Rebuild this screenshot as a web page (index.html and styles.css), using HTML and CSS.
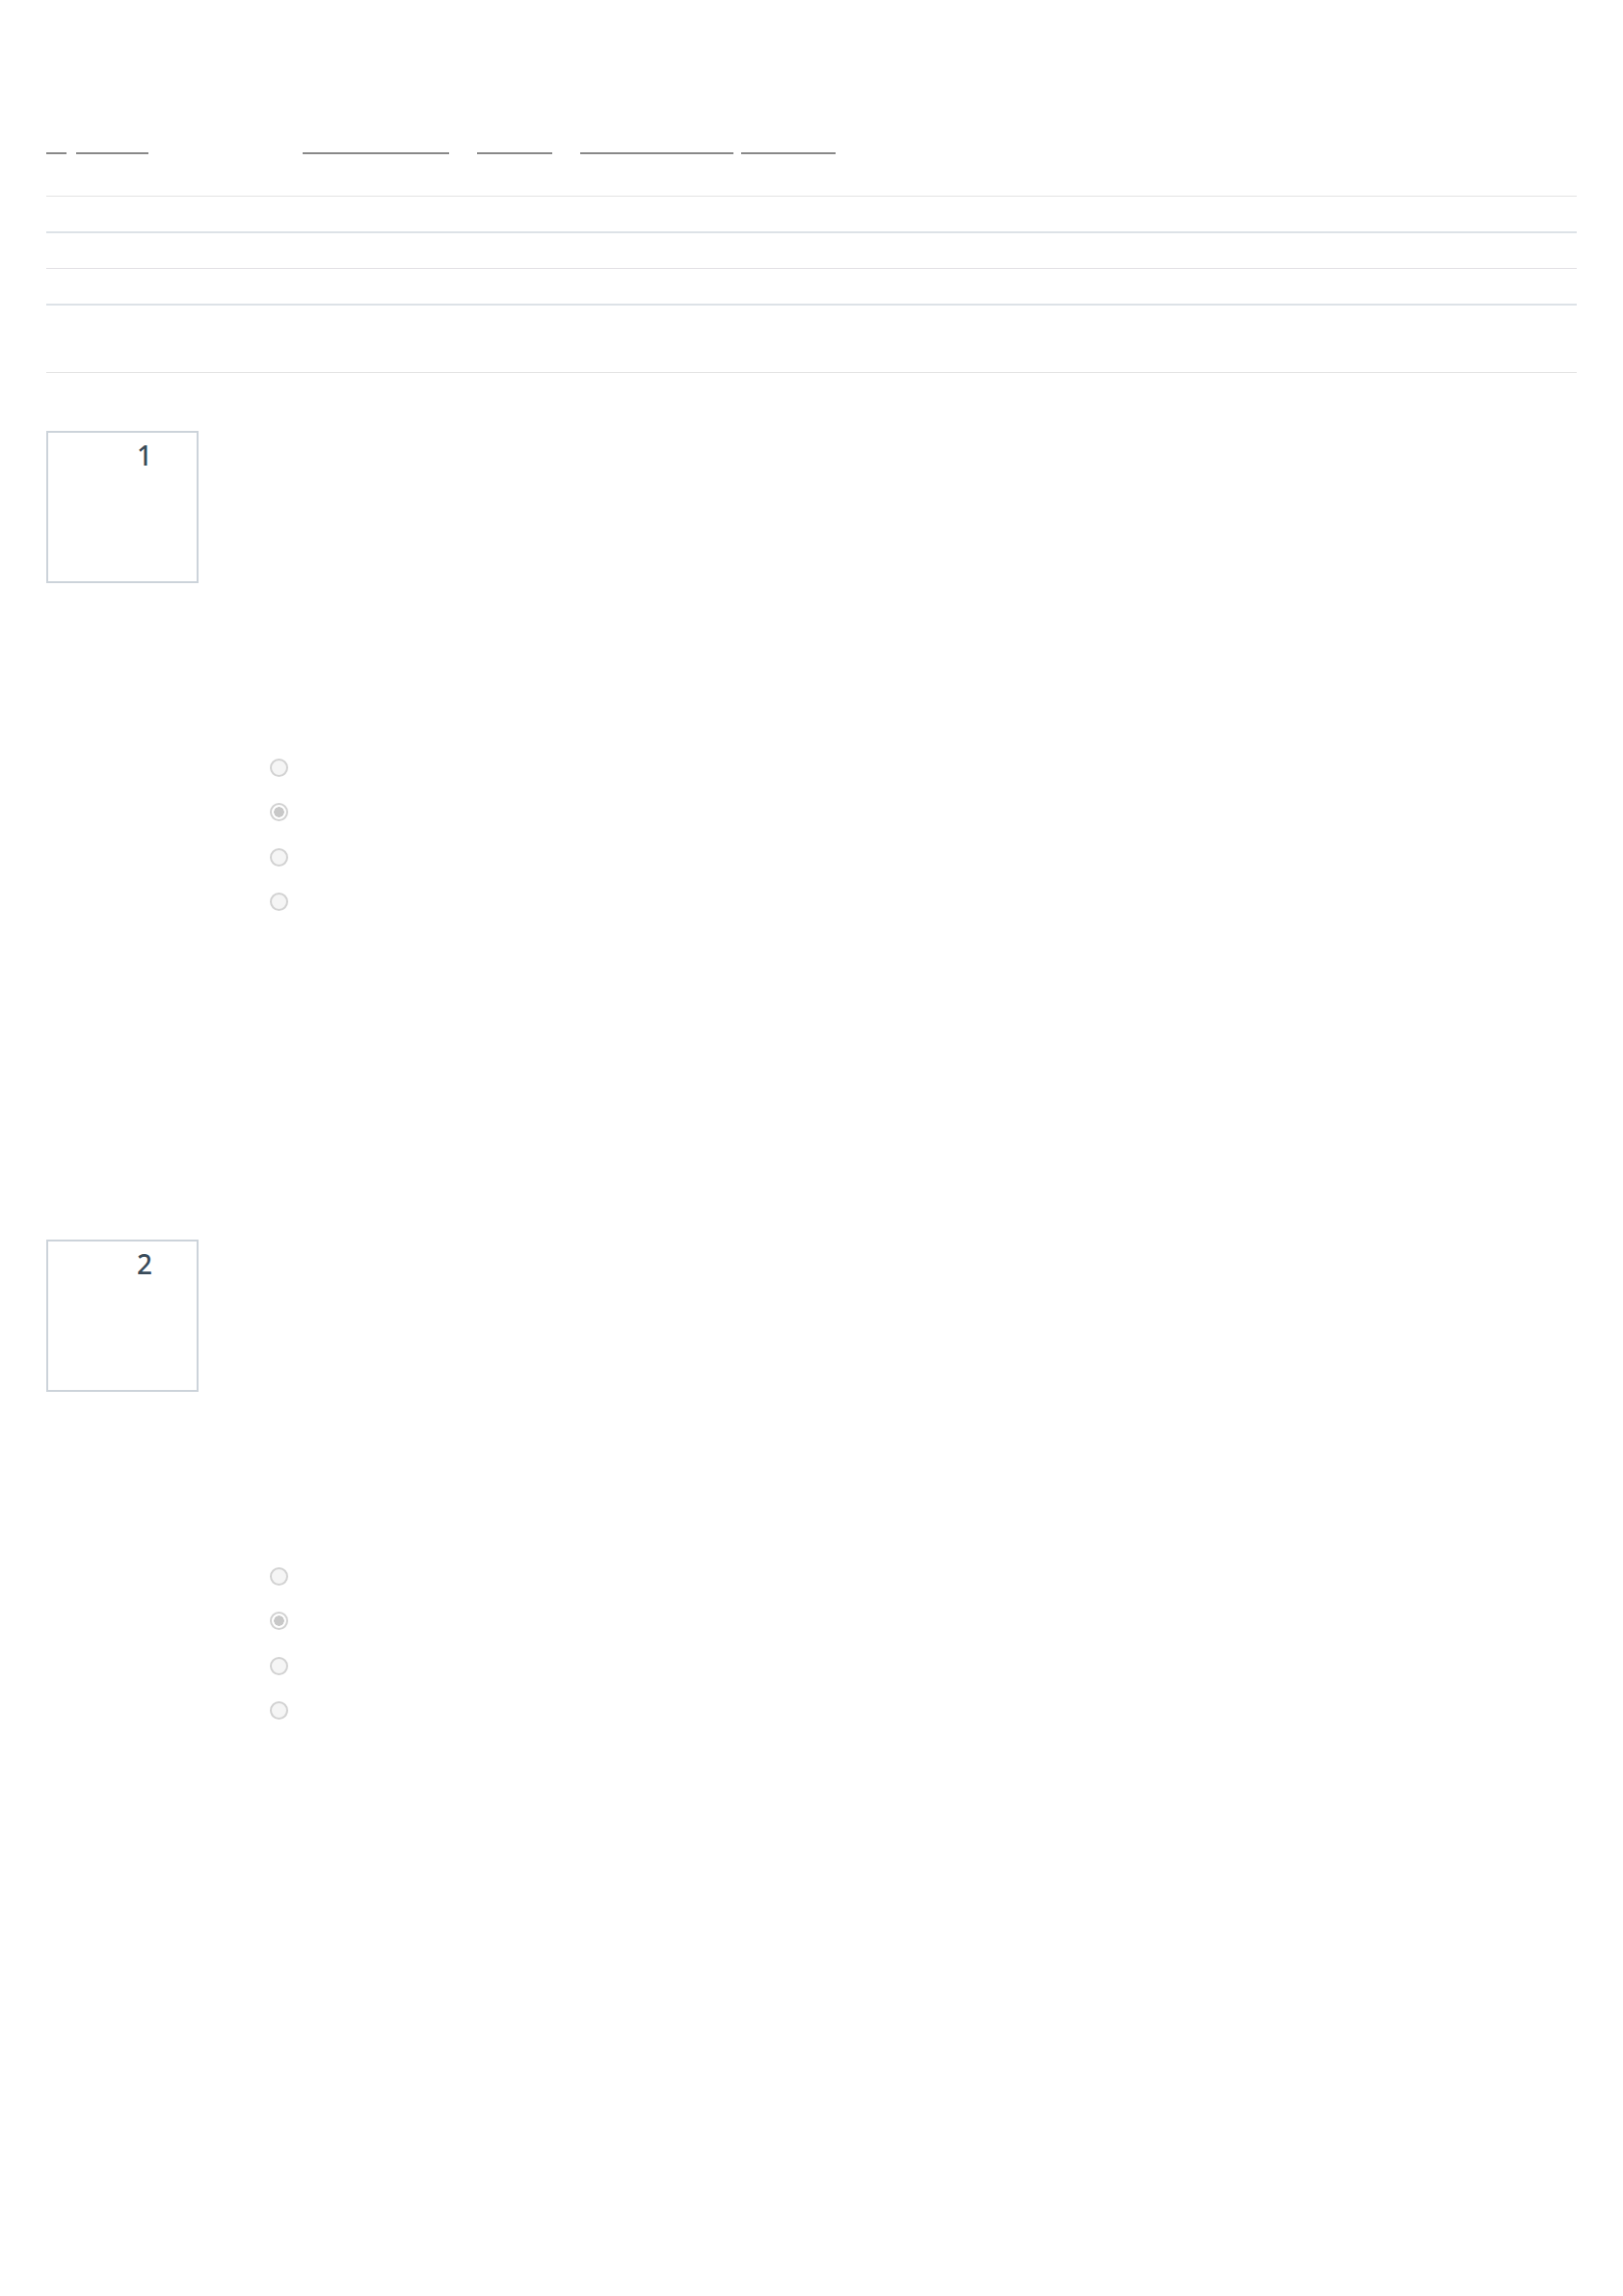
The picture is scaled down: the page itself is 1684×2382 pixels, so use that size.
FILE: index.html
```html
<!DOCTYPE html>
<html lang="en">
<head>
    <meta charset="UTF-8">
    <meta name="viewport" content="width=device-width, initial-scale=1.0">
    <title>Worksheet</title>
    <link rel="stylesheet" href="styles.css">
</head>
<body>

    <div class="blanks">
        <span class="blank b1"></span>
        <span class="blank b2"></span>
        <span class="blank b3"></span>
        <span class="blank b4"></span>
        <span class="blank b5"></span>
        <span class="blank b6"></span>
    </div>

    <div class="info">
        <div class="row r1"></div>
        <div class="row r2"></div>
        <div class="row r3"></div>
        <div class="row r4"></div>
    </div>

    <div class="question">
        <div class="num-box"><span class="num">1</span></div>
        <div class="options">
            <input type="radio" name="q1" disabled>
            <input type="radio" name="q1" disabled checked>
            <input type="radio" name="q1" disabled>
            <input type="radio" name="q1" disabled>
        </div>
    </div>

    <div class="question">
        <div class="num-box"><span class="num">2</span></div>
        <div class="options">
            <input type="radio" name="q2" disabled>
            <input type="radio" name="q2" disabled checked>
            <input type="radio" name="q2" disabled>
            <input type="radio" name="q2" disabled>
        </div>
    </div>

</body>
</html>
```

FILE: styles.css
```css
body {
    font-family: 'Noto Sans', sans-serif;
    margin: 0;
    padding: 0 48px;
    background: #FFFFFF;
    color: #3D4F5E;
}

/* fill-in blanks at the top */
.blanks {
    display: flex;
    padding-top: 158px;
}

.blank {
    display: block;
    height: 0;
    border-bottom: 2px solid #888888;
}

.b1 { width: 21px; }
.b2 { width: 75px; margin-left: 10px; }
.b3 { width: 152px; margin-left: 160px; }
.b4 { width: 78px; margin-left: 29px; }
.b5 { width: 159px; margin-left: 29px; }
.b6 { width: 98px; margin-left: 8px; }

.info {
    margin-top: 43px;
    border-top: 1px solid #E3E3E3;
}

.row {
    height: 36px;
}

.r1 { border-bottom: 2px solid #DDE2E7; }
.r2 { border-bottom: 1px solid #E2E0E5; }
.r3 { border-bottom: 2px solid #DDE2E7; }
.r4 {
    height: 69px;
    border-bottom: 1px solid #E3E3E3;
}

.question {
    margin-top: 60px;
    margin-bottom: 341px;
}

.question + .question {
    margin-top: 0;
}

.num-box {
    box-sizing: border-box;
    width: 158px;
    height: 158px;
    border: 2px solid #CCD3DA;
    padding: 9px 46px 0 0;
    text-align: right;
}

.num {
    font-size: 28px;
    line-height: 1;
    font-weight: 500;
    color: #3A4B5A;
}

.options {
    display: flex;
    flex-direction: column;
    align-items: flex-start;
    gap: 27.5px;
    margin-top: 181.5px;
    padding-left: 231.5px;
}

.options input {
    appearance: none;
    box-sizing: border-box;
    width: 19px;
    height: 19px;
    margin: 0;
    border: 2px solid #D2D2D2;
    border-radius: 50%;
    background: #F5F5F5;
}

.options input:checked {
    background: radial-gradient(circle closest-side, #C8C8C8 0 5px, #FFFFFF 5.5px);
}
```
